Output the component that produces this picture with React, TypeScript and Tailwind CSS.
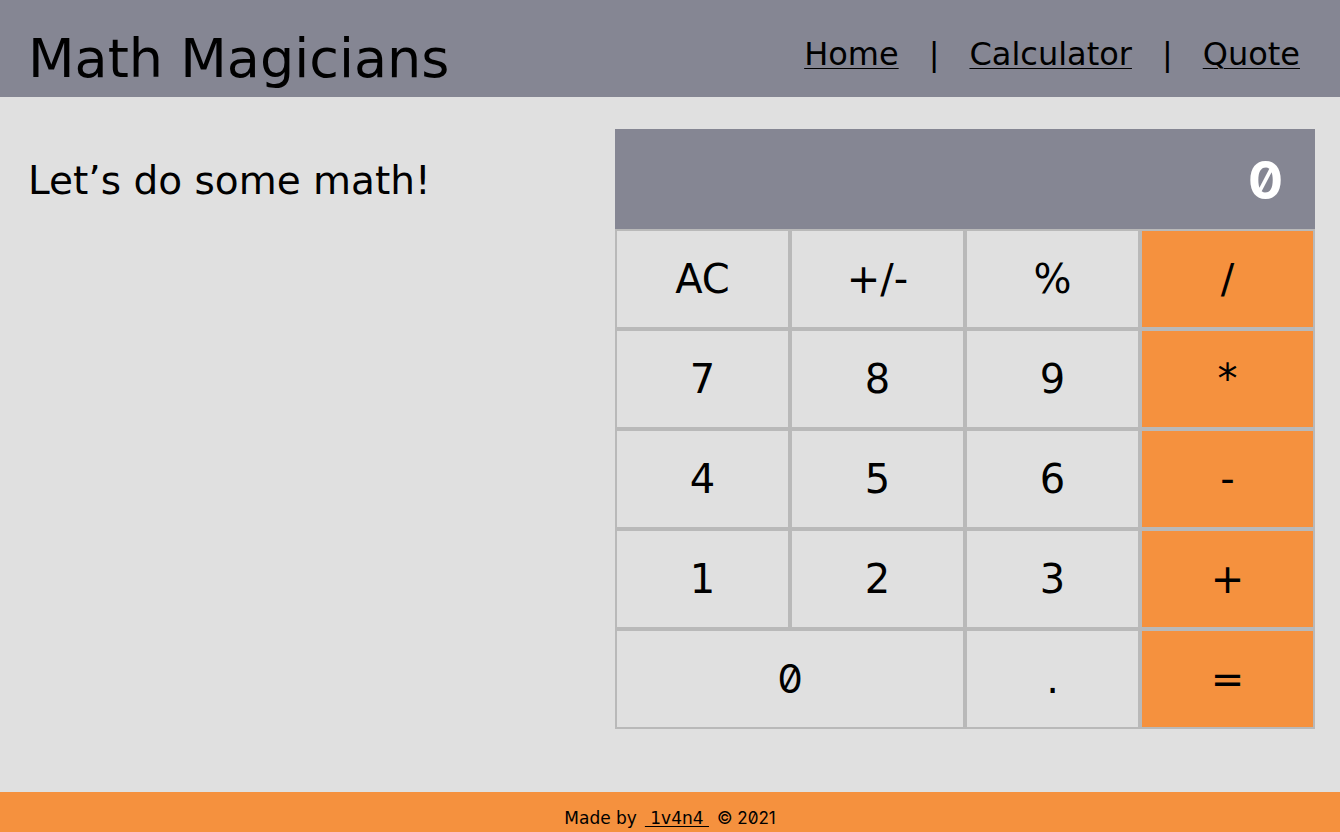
type Key = { label: string; wide?: boolean; operator?: boolean };

const keys: Key[] = [
  { label: 'AC' },
  { label: '+/-' },
  { label: '%' },
  { label: '/', operator: true },
  { label: '7' },
  { label: '8' },
  { label: '9' },
  { label: '*', operator: true },
  { label: '4' },
  { label: '5' },
  { label: '6' },
  { label: '-', operator: true },
  { label: '1' },
  { label: '2' },
  { label: '3' },
  { label: '+', operator: true },
  { label: '0', wide: true },
  { label: '.' },
  { label: '=', operator: true },
];

const links = ['Home', 'Calculator', 'Quote'];

function Header() {
  return (
    <header className="flex items-center justify-between bg-[#858693] pt-6 pr-10 pb-1 pl-7">
      <h1 className="text-[54px] leading-[69px]">Math Magicians</h1>
      <nav className="pb-2.5">
        <ul className="flex items-center gap-[30px] text-[32px] leading-10">
          {links.map((link, i) => (
            <li key={link} className="flex items-center gap-[30px]">
              {i > 0 && <span>|</span>}
              <a
                href={`#${link.toLowerCase()}`}
                className="underline decoration-1 underline-offset-3"
              >
                {link}
              </a>
            </li>
          ))}
        </ul>
      </nav>
    </header>
  );
}

function Calculator() {
  return (
    <section className="w-[700px] max-w-full shrink-0" aria-label="Calculator">
      <output className="flex h-[100px] items-center justify-end bg-[#858693] px-8 pt-1 font-['Inter',sans-serif] text-[52px] font-bold text-white slashed-zero">
        0
      </output>
      <div className="grid auto-rows-[100px] grid-cols-4">
        {keys.map(({ label, wide, operator }) => (
          <button
            key={label}
            type="button"
            className={`border-2 border-[#b9b9b9] text-[40px] ${
              wide ? "col-span-2 font-['Inter',sans-serif] slashed-zero" : ''
            } ${operator ? 'bg-[#f5913e]' : 'bg-[#e0e0e0]'}`}
          >
            {label}
          </button>
        ))}
      </div>
    </section>
  );
}

export default function App() {
  return (
    <div className="flex min-h-screen flex-col bg-[#e0e0e0] font-['DejaVu_Sans',sans-serif] text-black">
      <Header />
      <main className="flex grow flex-wrap items-start justify-between pt-8 pr-[25px] pb-8 pl-7">
        <h2 className="pt-6 text-[39px] leading-[56px]">Let’s do some math!</h2>
        <Calculator />
      </main>
      <footer className="flex h-10 items-end justify-center gap-2 bg-[#f5913e] pb-[2px] text-[17px] leading-6">
        <span>Made by</span>
        <a href="#author" className="underline decoration-1 underline-offset-2">
          {'\u00a01v4n4\u00a0'}
        </a>
        <span className="font-['Inter',sans-serif] slashed-zero">© 2021</span>
      </footer>
    </div>
  );
}
